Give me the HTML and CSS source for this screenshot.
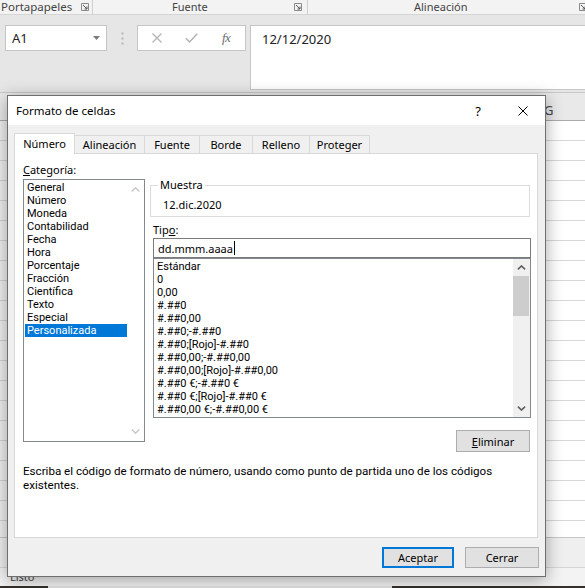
FILE: index.html
```html
<!DOCTYPE html>
<html lang="es">
<head>
<meta charset="utf-8">
<title>Formato de celdas</title>
<link rel="stylesheet" href="styles.css">
</head>
<body>
<div class="app">
  <div class="ribbon">
    <div class="grp g1"><span>Portapapeles</span>
      <svg class="launch" width="8" height="8" viewBox="0 0 8 8"><path d="M0.5 7.5V0.5H7.5V7.5H0.5" fill="none" stroke="#8a8a8a" stroke-width="1"/><path d="M2 2L6 6M6 3.5V6H3.5" fill="none" stroke="#555" stroke-width="1"/></svg>
    </div>
    <div class="grp g2"><span>Fuente</span>
      <svg class="launch" width="8" height="8" viewBox="0 0 8 8"><path d="M0.5 7.5V0.5H7.5V7.5H0.5" fill="none" stroke="#8a8a8a" stroke-width="1"/><path d="M2 2L6 6M6 3.5V6H3.5" fill="none" stroke="#555" stroke-width="1"/></svg>
    </div>
    <div class="grp g3"><span>Alineación</span>
      <svg class="launch" width="8" height="8" viewBox="0 0 8 8"><path d="M0.5 7.5V0.5H7.5V7.5H0.5" fill="none" stroke="#8a8a8a" stroke-width="1"/><path d="M2 2L6 6M6 3.5V6H3.5" fill="none" stroke="#555" stroke-width="1"/></svg>
    </div>
  </div>
  <div class="fbar">
    <div class="namebox"><span>A1</span>
      <svg class="dd" width="7" height="4" viewBox="0 0 7 4"><polygon points="0,0 7,0 3.5,4" fill="#7a7a7a"/></svg>
    </div>
    <div class="dots"><svg width="3" height="13" viewBox="0 0 3 13"><rect x="0.5" y="0.5" width="2" height="2" fill="#b5b5b5"/><rect x="0.5" y="5.5" width="2" height="2" fill="#b5b5b5"/><rect x="0.5" y="10.5" width="2" height="2" fill="#b5b5b5"/></svg></div>
    <div class="fbtns">
      <svg class="ic-x" width="10" height="10" viewBox="0 0 10 10"><path d="M0.5 0.5L9.5 9.5M9.5 0.5L0.5 9.5" stroke="#b3b3b3" stroke-width="1.3" fill="none"/></svg>
      <svg class="ic-ok" width="13" height="10" viewBox="0 0 13 10"><path d="M0.8 5.2L4.5 9L12.2 0.8" stroke="#b3b3b3" stroke-width="1.5" fill="none"/></svg>
      <span class="fx">fx</span>
    </div>
    <div class="finput">12/12/2020</div>
  </div>
  <div class="colhead"><div class="chfill"></div><div class="chcell">G</div></div>
  <div class="sheet"><div class="rowhead"></div><div class="grid"></div></div>
  <div class="tabsbar"></div>
  <div class="status">Listo</div>
  <div class="taskbar"><div class="tb1"></div><div class="tb2"></div><div class="tb3"></div></div>
</div>

<div class="dialog">
  <div class="titlebar">
    <span class="title">Formato de celdas</span>
    <span class="help">?</span>
    <svg class="close" width="10" height="10" viewBox="0 0 10 10"><path d="M0.5 0.5L9.5 9.5M9.5 0.5L0.5 9.5" stroke="#000" stroke-width="1" fill="none"/></svg>
  </div>
  <div class="dbody">
    <div class="tabs">
      <div class="tab active t1">Número</div>
      <div class="tab t2">Alineación</div>
      <div class="tab t3">Fuente</div>
      <div class="tab t4">Borde</div>
      <div class="tab t5">Relleno</div>
      <div class="tab t6">Proteger</div>
    </div>
    <div class="panel">
      <div class="cols">
        <div class="leftcol">
          <div class="lbl"><u>C</u>ategoría:</div>
          <div class="catlist">
            <ul class="items catitems">
              <li>General</li>
              <li>Número</li>
              <li>Moneda</li>
              <li>Contabilidad</li>
              <li>Fecha</li>
              <li>Hora</li>
              <li>Porcentaje</li>
              <li>Fracción</li>
              <li>Científica</li>
              <li>Texto</li>
              <li>Especial</li>
              <li class="sel">Personalizada</li>
            </ul>
            <div class="vs light">
              <div class="arr"><svg width="9" height="5" viewBox="0 0 9 5"><polyline points="0.7,4.5 4.5,0.8 8.3,4.5" fill="none" stroke="#c4c4c4" stroke-width="1.3"/></svg></div>
              <div class="arr"><svg width="9" height="5" viewBox="0 0 9 5"><polyline points="0.7,0.5 4.5,4.2 8.3,0.5" fill="none" stroke="#c4c4c4" stroke-width="1.3"/></svg></div>
            </div>
          </div>
        </div>
        <div class="rightcol">
          <fieldset class="muestra">
            <legend>Muestra</legend>
            <div class="sample">12.dic.2020</div>
          </fieldset>
          <div class="lbl tipo">Tip<u>o</u>:</div>
          <div class="tbox"><span>dd.mmm.aaaa</span><span class="caret"></span></div>
          <div class="typelist">
            <ul class="items typeitems">
              <li>Estándar</li>
              <li>0</li>
              <li>0,00</li>
              <li>#.##0</li>
              <li>#.##0,00</li>
              <li>#.##0;-#.##0</li>
              <li>#.##0;[Rojo]-#.##0</li>
              <li>#.##0,00;-#.##0,00</li>
              <li>#.##0,00;[Rojo]-#.##0,00</li>
              <li>#.##0 €;-#.##0 €</li>
              <li>#.##0 €;[Rojo]-#.##0 €</li>
              <li>#.##0,00 €;-#.##0,00 €</li>
            </ul>
            <div class="vs dark">
              <div class="arr"><svg width="9" height="5" viewBox="0 0 9 5"><polyline points="0.9,4.3 4.5,0.9 8.1,4.3" fill="none" stroke="#606060" stroke-width="1.6"/></svg></div>
              <div class="thumb"></div>
              <div class="vsfill"></div>
              <div class="arr"><svg width="9" height="5" viewBox="0 0 9 5"><polyline points="0.9,0.7 4.5,4.1 8.1,0.7" fill="none" stroke="#606060" stroke-width="1.6"/></svg></div>
            </div>
          </div>
          <div class="btnrow"><button class="btn elim"><u>E</u>liminar</button></div>
        </div>
      </div>
      <p class="desc">Escriba el código de formato de número, usando como punto de partida uno de los códigos<br>existentes.</p>
    </div>
    <div class="footer">
      <button class="btn ok">Aceptar</button>
      <button class="btn cerrar">Cerrar</button>
    </div>
  </div>
</div>
</body>
</html>
```

FILE: styles.css
```css
* { box-sizing: border-box; }
html, body { margin: 0; padding: 0; }
body {
  width: 585px;
  height: 588px;
  overflow: hidden;
  position: relative;
  background: #fff;
  font-family: "Noto Sans", "Open Sans", sans-serif;
  font-size: 11px;
  color: #000;
}

/* ---------- Excel background ---------- */
.app { display: flex; flex-direction: column; height: 588px; overflow: hidden; }

.ribbon {
  height: 15px;
  flex: none;
  display: flex;
  background: #f3f3f3;
  border-bottom: 1px solid #d5d5d5;
  color: #444;
  font-size: 11px;
  line-height: 14px;
}
.grp { height: 14px; display: flex; align-items: center; border-right: 1px solid #cfcfcf; white-space: nowrap; }
.g1 { width: 93px; padding-left: 1px; font-size: 11.5px; }
.g2 { width: 215px; padding-left: 79px; }
.g3 { flex: 1; padding-left: 106px; border-right: none; }
.launch { margin-left: auto; margin-right: 3px; flex: none; }
.g2 .launch { margin-right: 5px; }
.g3 .launch { margin-right: -2px; }

.fbar {
  height: 77px;
  flex: none;
  display: flex;
  align-items: flex-start;
  padding: 10px 0 0 5px;
  background: #e6e6e6;
  overflow: hidden;
}
.namebox {
  width: 102px; height: 26px; flex: none;
  display: flex; align-items: center;
  padding-left: 6px;
  background: #fff;
  border: 1px solid #c6c6c6;
  font-size: 13px;
  color: #222;
}
.dd { margin-left: auto; margin-right: 6px; }
.dots { width: 30px; height: 26px; flex: none; display: flex; align-items: center; justify-content: center; padding-left: 1px; }
.fbtns {
  width: 109px; height: 26px; flex: none;
  display: flex; align-items: center;
  padding-left: 14px;
  background: #fff;
  border: 1px solid #c6c6c6;
}
.ic-ok { margin-left: 23px; }
.fx {
  margin-left: 24px;
  font-family: "Liberation Serif", serif;
  font-style: italic;
  font-size: 13px;
  color: #6b6b6b;
  letter-spacing: -0.5px;
}
.finput {
  flex: 0 0 345px;
  height: 65px;
  margin-left: 4px;
  padding: 4px 0 0 11px;
  background: #fff;
  border: 1px solid #c6c6c6;
  font-size: 13px;
  line-height: 18px;
  color: #222;
}

.colhead {
  height: 29px; flex: none;
  display: flex; align-items: flex-end;
  background: #e9e9e9;
  border-top: 1px solid #c8c8c8;
  border-bottom: 1px solid #ababab;
}
.chfill { flex: 0 0 544px; }
.chcell { line-height: 18px; padding-bottom: 1px; font-size: 13px; color: #444; }

.sheet { flex: 1; display: flex; min-height: 0; }
.rowhead {
  width: 25px;
  background: repeating-linear-gradient(to bottom, #efefef 0 19px, #d0d0d0 19px 20px);
}
.grid {
  flex: 1;
  background: repeating-linear-gradient(to bottom, #fff 0 19px, #d9d9d9 19px 20px);
}
.tabsbar { height: 30px; flex: none; background: #efefef; border-top: 1px solid #c6c6c6; }
.status { height: 19px; flex: none; background: #f3f3f3; border-top: 1px solid #d6d6d6; padding-left: 10px; line-height: 18px; color: #444; font-size: 11px; }
.taskbar { height: 2px; flex: none; display: flex; }
.tb1 { width: 48px; background: #35312a; }
.tb2 { width: 344px; background: #e2e2e2; }
.tb3 { flex: 1; background: #35312a; }

/* ---------- Dialog ---------- */
.dialog {
  position: absolute;
  left: 7px; top: 95px;
  width: 539px; height: 482px;
  display: flex; flex-direction: column;
  background: #f0f0f0;
  border: 1px solid #6f6f6f;
  box-shadow: 0 3px 16px rgba(0, 0, 0, 0.35);
}
.titlebar {
  height: 29px; flex: none;
  display: flex; align-items: center;
  padding-left: 8px;
  background: #fff;
}
.title { font-size: 11.5px; }
.help { margin-left: auto; width: 12px; text-align: center; font-size: 13px; }
.close { margin-left: 34px; margin-right: 17px; flex: none; }

.dbody { flex: 1; display: flex; flex-direction: column; padding: 8px 7px 8px 6px; }

.tabs { height: 20px; flex: none; display: flex; align-items: flex-end; }
.tab {
  height: 18px; flex: none;
  text-align: center;
  line-height: 17px;
  background: #f0f0f0;
  border-top: 1px solid #d9d9d9;
  border-right: 1px solid #d9d9d9;
  white-space: nowrap;
}
.tab.active {
  position: relative; z-index: 1;
  height: 21px;
  margin-bottom: -1px;
  line-height: 19px;
  background: #fff;
  border-left: 1px solid #d9d9d9;
}
.t1 { width: 61px; }
.t2 { width: 70px; }
.t3 { width: 55px; }
.t4 { width: 53px; }
.t5 { width: 57px; }
.t6 { width: 60px; }

.panel {
  height: 385px; flex: none;
  padding: 9px 6px 0 8px;
  background: #fff;
  border: 1px solid #d9d9d9;
}
.cols { display: flex; align-items: flex-start; gap: 5px; }
.leftcol { width: 122px; flex: none; }
.lbl { height: 14px; line-height: 14px; }

.items {
  list-style: none; margin: 0; flex: 1; min-width: 0; overflow: hidden;
  font-family: Roboto, "Liberation Sans", sans-serif;
  font-size: 11px;
}
.items li { height: 13px; padding-top: 1px; line-height: 12px; white-space: nowrap; }

.catlist { margin-top: 2px; height: 263px; display: flex; background: #fff; border: 1px solid #828790; }
.catitems { padding: 1px 0 0 1px; }
.catitems li { padding-left: 2px; }
.catitems li.sel { background: #0078d7; color: #fff; }

.vs { width: 17px; flex: none; display: flex; flex-direction: column; justify-content: space-between; }
.vs.light { padding: 1px 0 1px; }
.vs.dark { background: #f0f0f0; }
.arr { height: 17px; flex: none; display: flex; align-items: center; justify-content: center; }
.thumb { height: 40px; flex: none; margin: 0 1px 0 0; background: #cdcdcd; }
.vsfill { flex: 1; }

.rightcol { width: 381px; flex: none; margin-top: 15px; }
.muestra {
  margin: 0 1px 0 0;
  padding: 0 0 5px 7px;
  min-width: 0;
  border: 1px solid #dcdcdc;
}
.muestra legend { padding: 0 2px; line-height: 14px; }
.sample { padding: 6px 0 0 5px; line-height: 13px; }

.tipo { margin: 6px 0 0 3px; }
.tbox {
  height: 20px;
  margin: 1px 0 0 3px;
  display: flex; align-items: center;
  padding-left: 4px;
  background: #fff;
  border: 1px solid #7a7a7a;
}
.caret { width: 1px; height: 14px; margin-left: 1px; background: #000; }
.typelist { height: 160px; margin-left: 3px; display: flex; background: #fff; border: 1px solid #828790; }
.typeitems { padding: 1px 0 0 3px; }

.btnrow { display: flex; justify-content: flex-end; margin-top: 12px; padding-right: 1px; }
.btn {
  width: 74px; height: 22px;
  padding: 0;
  font: inherit;
  color: #000;
  background: #e1e1e1;
  border: 1px solid #adadad;
}
.desc {
  margin: 12px 0 0;
  font-family: Roboto, "Liberation Sans", sans-serif;
  font-size: 11.6px;
  line-height: 14px;
}

.footer { display: flex; justify-content: flex-end; gap: 11px; margin: 9px -1px 0 0; }
.ok { width: 72px; height: 21px; border: 2px solid #0078d7; }
.cerrar { width: 74px; height: 21px; }
```
